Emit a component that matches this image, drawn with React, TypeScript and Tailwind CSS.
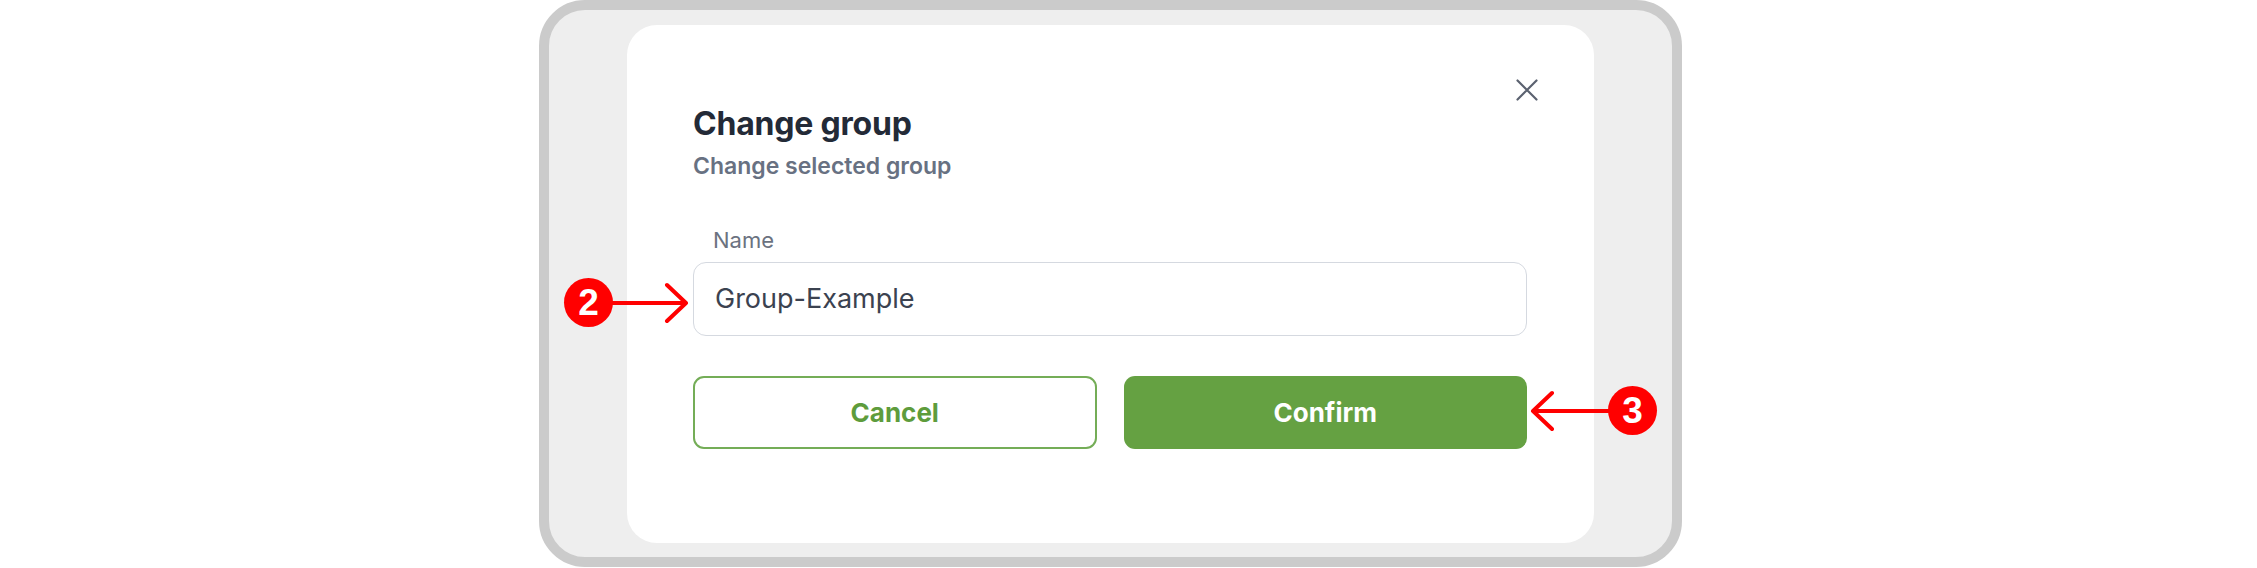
export default function App() {
  return (
    <div
      className="relative h-[568px] w-full bg-white pl-[539px]"
      style={{ fontFamily: "Inter, 'Noto Sans', sans-serif" }}
    >
      <div className="flex h-[567px] w-[1143px] rounded-[46px] border-[10px] border-[#cbcbcb] bg-[#eeeeee] px-[78px] pb-[14px] pt-[15px]">
        <div className="relative flex flex-1 flex-col rounded-[30px] bg-white pl-[66px] pr-[67px] pt-[83px]">
          <button className="absolute right-[56px] top-[54px] text-[#5b6270]">
            <svg width="22" height="22" viewBox="0 0 22 22" fill="none" stroke="currentColor" strokeWidth="2.2" strokeLinecap="round">
              <path d="M1.5 1.5 20.5 20.5M20.5 1.5 1.5 20.5" />
            </svg>
          </button>

          <h1 className="text-[32px] font-bold leading-[32px] tracking-[-0.2px] text-[#232a37]">Change group</h1>
          <p className="mt-[15px] text-[23px] font-semibold leading-[23px] text-[#687182]">Change selected group</p>

          <label className="mt-[51px] pl-[20px] text-[22px] leading-[22px] text-[#6b7280]">Name</label>
          <div className="mt-[11px] flex h-[74px] items-center rounded-[13px] border border-[#d5d9e0] pl-[21px] text-[27px] text-[#3b4250]">
            Group-Example
          </div>

          <div className="mt-[40px] grid grid-cols-2 gap-[27px]">
            <button className="h-[73px] rounded-[11px] border-2 border-[#74ad57] text-[26px] font-bold text-[#5e9c3c]">
              Cancel
            </button>
            <button className="h-[73px] rounded-[11px] bg-[#65a142] text-[26px] font-bold text-white">
              Confirm
            </button>
          </div>
        </div>
      </div>

      {/* callout 2 */}
      <div className="absolute left-[564px] top-[278px] flex items-center">
        <div
          className="flex h-[49px] w-[49px] items-center justify-center rounded-full bg-[#ff0000] text-[37px] font-bold text-white"
          style={{ fontFamily: "'Liberation Sans', Arial, sans-serif" }}
        >
          2
        </div>
        <svg width="78" height="42" viewBox="0 0 78 42" fill="none" stroke="#ff0000" strokeWidth="4" strokeLinecap="round" strokeLinejoin="round" className="-ml-[1px]">
          <path d="M0 21H74M55 3 74 21 55 39" />
        </svg>
      </div>

      {/* callout 3 */}
      <div className="absolute left-[1530px] top-[386px] flex items-center">
        <svg width="79" height="42" viewBox="0 0 79 42" fill="none" stroke="#ff0000" strokeWidth="4" strokeLinecap="round" strokeLinejoin="round" className="-mr-[1px]">
          <path d="M79 21H3M22 3 3 21 22 39" />
        </svg>
        <div
          className="flex h-[49px] w-[49px] items-center justify-center rounded-full bg-[#ff0000] text-[37px] font-bold text-white"
          style={{ fontFamily: "'Liberation Sans', Arial, sans-serif" }}
        >
          3
        </div>
      </div>
    </div>
  )
}
